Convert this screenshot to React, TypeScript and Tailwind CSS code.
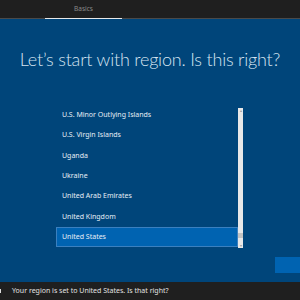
import React from "react";

const items = [
  "U.S. Minor Outlying Islands",
  "U.S. Virgin Islands",
  "Uganda",
  "Ukraine",
  "United Arab Emirates",
  "United Kingdom",
  "United States",
];

export default function App() {
  return (
    <div
      className="w-[300px] h-[300px] overflow-hidden flex flex-col bg-[#00457a]"
      style={{ fontFamily: '"Noto Sans", "Open Sans", sans-serif' }}
    >
      {/* top bar */}
      <div className="h-[19px] shrink-0 bg-[#1f1f1f] border-b border-[#4a4a4a] flex">
        <div className="ml-[45px] w-[77px] h-[19px] flex flex-col">
          <div className="flex-1 flex items-center justify-center text-[6.5px] text-[#8a8a8a]">
            Basics
          </div>
          <div className="h-[1px] bg-[#e8e8e8]" />
        </div>
      </div>

      {/* main */}
      <div className="flex-1 flex flex-col">
        <div
          className="mt-[28px] h-[24px] flex items-center justify-center whitespace-nowrap text-[18px] font-light tracking-[-0.2px] text-[#d6e4f1] leading-[24px]"
          style={{ fontFamily: 'Lato, "Noto Sans", sans-serif' }}
        >
          Let’s start with region. Is this right?
        </div>

        <div className="mt-[37px] ml-[56px] w-[187px] h-[140px] flex">
          <div className="flex-1 h-[140px] overflow-hidden">
            <div className="-mt-[3px] flex flex-col">
              {items.map((it, i) => {
                const sel = i === items.length - 1;
                return (
                  <div
                    key={it}
                    className={
                      sel
                        ? "h-[20.33px] flex items-center pl-[5px] text-[7px] text-[#e6eef6] bg-[#0063b1] border border-[#3b80bf]"
                        : "h-[20.33px] flex items-center pl-[6px] text-[7px] text-[#e6eef6]"
                    }
                  >
                    {it}
                  </div>
                );
              })}
            </div>
          </div>
          <div className="w-[5px] h-[140px] bg-[#e8e8e8] flex flex-col items-center">
            <div className="h-[5px] flex items-center justify-center text-[4px] leading-none text-[#9a9a9a]">
              ▴
            </div>
            <div className="flex-1" />
            <div className="w-[5px] h-[5px] bg-[#c3c3c3]" />
            <div className="h-[5px]" />
            <div className="h-[5px] flex items-center justify-center text-[4px] leading-none text-[#9a9a9a]">
              ▾
            </div>
          </div>
        </div>

        <div className="mt-[9px] ml-[275px] w-[60px] h-[16px] shrink-0 bg-[#0063b1]" />
      </div>

      {/* bottom bar */}
      <div className="h-[18px] shrink-0 bg-[#1f1f1f] flex items-center">
        <div className="w-[1px] h-[4px] bg-[#dcdcdc]" />
        <div className="ml-[11px] text-[7px] text-[#e2e2e2]">
          Your region is set to United States. Is that right?
        </div>
      </div>
    </div>
  );
}
